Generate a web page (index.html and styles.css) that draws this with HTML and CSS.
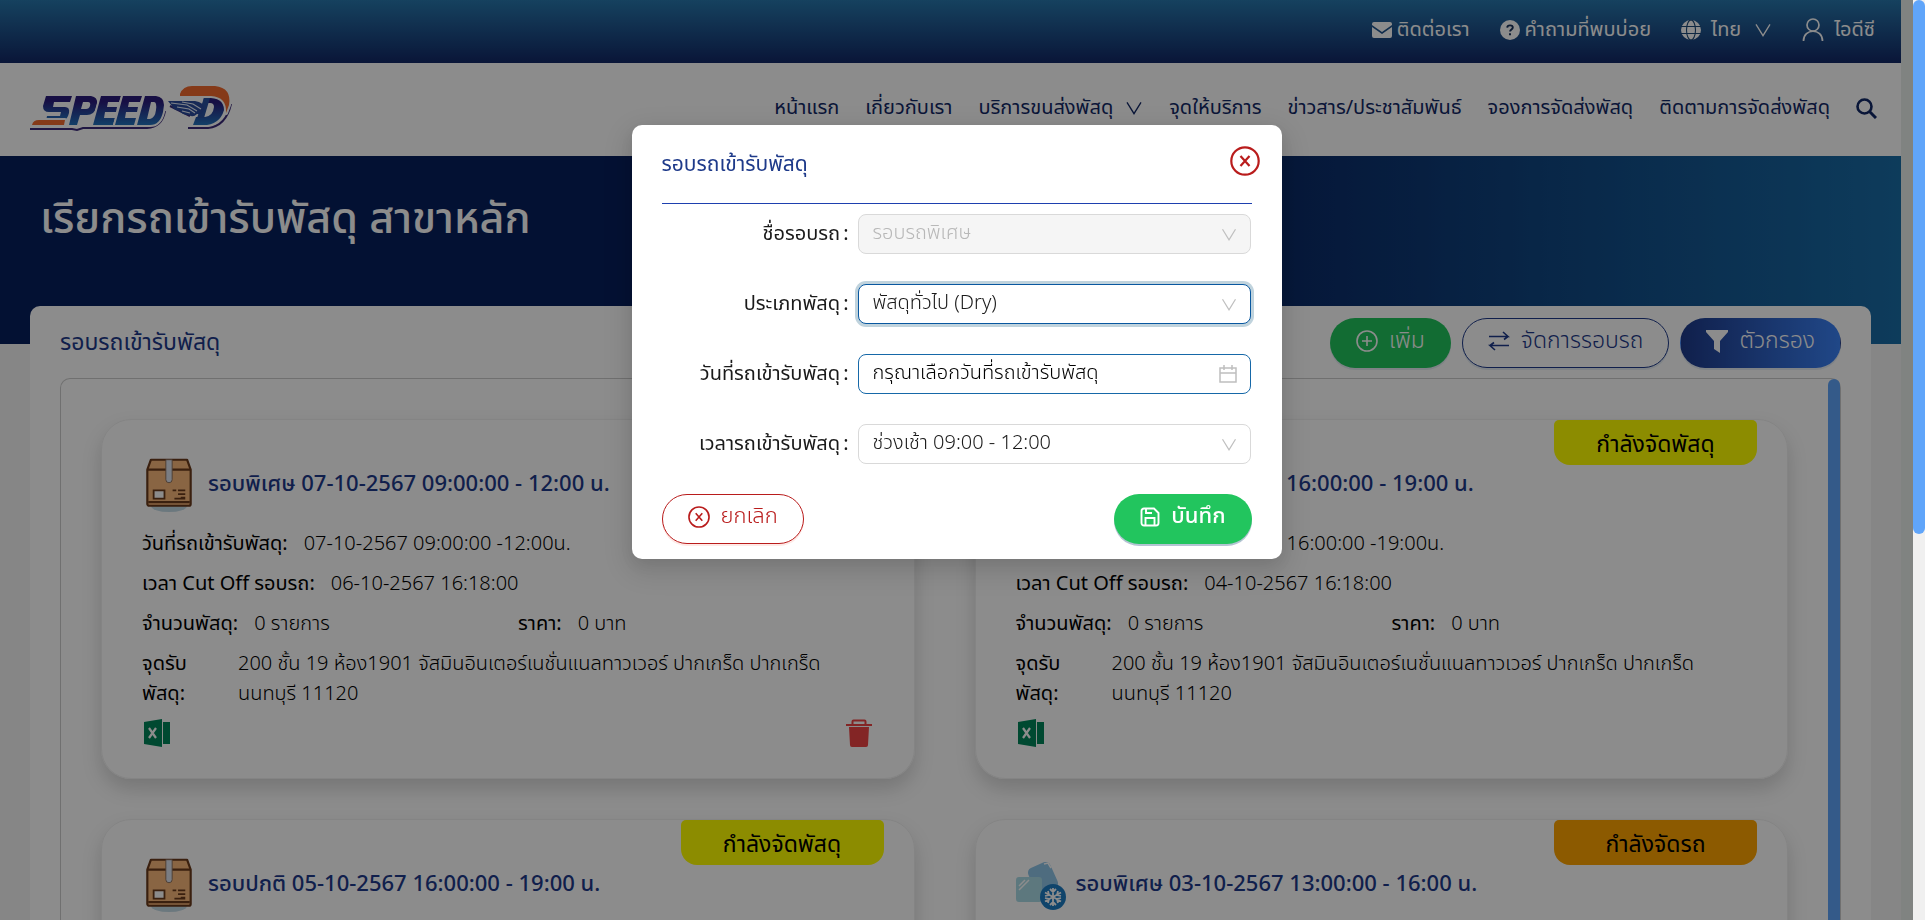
FILE: index.html
```
<!DOCTYPE html>
<html lang="th">
<head>
<meta charset="utf-8">
<title>SPEED-D</title>
<link rel="stylesheet" href="styles.css">
</head>
<body>
<svg class="sprite" aria-hidden="true">
  <symbol id="chevron" viewBox="0 0 18 16"><path d="M1 1.500l8 13 8-13" fill="none" stroke="currentColor" stroke-width="1.500"/></symbol>
  <symbol id="box" viewBox="0 0 50 62">
    <ellipse cx="25" cy="54" rx="20" ry="7" fill="#c3dbe6"/>
    <path d="M5 3h40l4 11v38a2 2 0 0 1-2 2H3a2 2 0 0 1-2-2V14z" fill="#f9b97b" stroke="#6b3b1c" stroke-width="2.400" stroke-linejoin="round"/>
    <path d="M1 14h48M2 50h46" stroke="#6b3b1c" stroke-width="2.400"/>
    <path d="M21.500 3h7v22a3.500 3.500 0 0 1-7 0z" fill="#dfe3ee" stroke="#8a6a55"/>
    <path d="M8 37h12v9H8z" fill="#fff" stroke="#6b3b1c" stroke-width="2"/>
    <path d="M29 37h4M35 37h8M35 41h8M38 45h5M31 46h12" stroke="#6b3b1c" stroke-width="2"/>
  </symbol>
  <symbol id="cold" viewBox="0 0 50 50">
    <rect x="15" y="4" width="24" height="28" rx="5" fill="#8fc5e8" transform="rotate(-24 27 18)"/>
    <path d="M28 4l4-1 3 5" fill="none" stroke="#fff" stroke-width="1.500"/>
    <rect x="0" y="17" width="26" height="25" rx="3" fill="#a9dbe6"/>
    <path d="M3 26l6-6M3 30l10-10" stroke="#fff" stroke-width="1.500"/>
    <circle cx="37" cy="37" r="13" fill="#1d7cc4"/>
    <g fill="none" stroke="#fff" stroke-width="1.800"><path d="M37 28v18M29 32.500l16 9M29 41.500l16-9M34 29l3 3 3-3M34 45l3-3 3 3M29 36l4-1-1-4M45 38l-4 1 1 4M29 38l4 1-1 4M45 36l-4-1 1-4"/></g>
  </symbol>
  <symbol id="excel" viewBox="0 0 26 28"><path d="M0 3L18 0v28L0 25z" fill="#00855a"/><path d="M19 3h7v22h-7z" fill="#00855a"/><path d="M5 9l7 10M12 9L5 19" stroke="#fff" stroke-width="2.200"/></symbol>
  <symbol id="trash" viewBox="0 0 26 28"><path d="M3 8h20l-1 18a2 2 0 0 1-2 2H6a2 2 0 0 1-2-2zM0 5h26v2H0z" fill="#ef4444"/><path d="M6.500 6V2.500a1 1 0 0 1 1-1h11a1 1 0 0 1 1 1V6" fill="none" stroke="#ef4444" stroke-width="2"/></symbol>
  <symbol id="circle-x" viewBox="0 0 30 30"><circle cx="15" cy="15" r="13.700" fill="none" stroke="currentColor" stroke-width="2.200"/><path d="M10.500 10l9 10M19.500 10l-9 10" stroke="currentColor" stroke-width="2.200"/></symbol>
</svg>

<div class="page">
  <div class="topbar">
    <a class="toplink" href="#"><svg width="20" height="16" viewBox="0 0 20 16"><path d="M2 0h16a2 2 0 0 1 2 2v1l-10 7L0 3V2a2 2 0 0 1 2-2zM0 5l10 7 10-7v9a2 2 0 0 1-2 2H2a2 2 0 0 1-2-2z" fill="currentColor"/></svg>ติดต่อเรา</a>
    <a class="toplink" href="#"><svg width="20" height="20" viewBox="0 0 20 20"><circle cx="10" cy="10" r="10" fill="currentColor"/><path d="M7.200 7.600c.2-3 5.600-3 5.600 0 0 2-2.700 2-2.700 4M10 13.200v2" fill="none" stroke="#16305a" stroke-width="1.900"/></svg>คำถามที่พบบ่อย</a>
    <a class="toplink lang" href="#"><svg width="20" height="20" viewBox="0 0 20 20"><circle cx="10" cy="10" r="10" fill="currentColor"/><g fill="none" stroke="#1d4a78" stroke-width="1.100"><ellipse cx="10" cy="10" rx="4.500" ry="10"/><path d="M0 6.500h20M0 13.500h20"/></g></svg>ไทย<svg class="down" width="18" height="14"><use href="#chevron"/></svg></a>
    <a class="toplink user" href="#"><svg width="22" height="23" viewBox="0 0 22 23"><circle cx="11" cy="7" r="6" fill="none" stroke="currentColor" stroke-width="1.700"/><path d="M1.500 23c0-13 19-13 19 0" fill="none" stroke="currentColor" stroke-width="1.700"/></svg>ไอดีซี</a>
  </div>

  <header class="header">
    <svg class="logo" viewBox="0 0 206 48" role="img" aria-label="SPEED-D">
      <defs>
        <linearGradient id="ink" x1="0" y1="0" x2="0" y2="1"><stop offset="0.200" stop-color="#2b1c7c"/><stop offset="1" stop-color="#2273bd"/></linearGradient>
      </defs>
      <path d="M0 44v1h42l5 1 6-2h64q15-1 18-17M140 22l20 10M158 44h20q18-2 23-24" fill="none" stroke="#3b2a7a" stroke-width="2"/>
      <g stroke="#fff" stroke-width="4" stroke-linejoin="round" paint-order="stroke">
        <path d="M16 12h26l-2 6H24l-1 5h12q5 0 4 6l-1 3q-2 5-7 5H16l1-5h13l1-4H19q-6 0-6-6z" fill="url(#ink)"/>
        <path d="M9 36h26l-1 5H2q1-5 7-5z" fill="#f26a2e"/>
        <path d="M46 12h15q7 1 6 8l-1 4q-2 7-9 7h-7l-3 10h-8zm7 6l-2 7h5q3 0 4-3 1-4-2-4z" fill="url(#ink)" fill-rule="evenodd"/>
        <path d="M71 12h20l-2 6H78l-1 5h10l-1 5H75l-1 6h11l-2 7H63z" fill="url(#ink)"/>
        <path d="M93 12h19l-2 6H99l-1 5h10l-1 5H96l-1 6h11l-2 7H85z" fill="url(#ink)"/>
        <path d="M115 12h11q8 1 8 9l-1 7q-3 13-13 13h-13zm6 6l-4 17h3q5-1 6-9 1-8-2-8z" fill="url(#ink)" fill-rule="evenodd"/>
        <path d="M174 13h14q8 1 7 9-3 17-18 19h-14l3-8h9q8-1 9-10 0-4-4-4h-7z" fill="url(#ink)"/>
        <path d="M150 10q3-8 12-8h23q17 2 14 19l-3 8q1-16-15-17h-31z" fill="#f26a2e"/>
      </g>
      <path d="M174 14h6l-6 20h-7z" fill="#28509f"/>
      <path d="M138 17l27 0q9 1 9 8-1 6-7 5-4 4-8 1-7 0-9-4-7-1-8-5z" fill="#2a4c9d"/>
      <path d="M141 19l16 2 10 6M147 23l12 2 6 4M152 27l8 2M152 18l11 2 8 5" fill="none" stroke="#e8eefa" stroke-width="1.100"/>
    </svg>
    <nav class="nav">
      <a href="#">หน้าแรก</a>
      <a href="#">เกี่ยวกับเรา</a>
      <a href="#">บริการขนส่งพัสดุ<svg class="down" width="18" height="14"><use href="#chevron"/></svg></a>
      <a href="#">จุดให้บริการ</a>
      <a href="#">ข่าวสาร/ประชาสัมพันธ์</a>
      <a href="#">จองการจัดส่งพัสดุ</a>
      <a href="#">ติดตามการจัดส่งพัสดุ</a>
      <a href="#" aria-label="ค้นหา"><svg width="21" height="21" viewBox="0 0 21 21"><circle cx="8.500" cy="8.500" r="7" fill="none" stroke="currentColor" stroke-width="2.600"/><path d="M13.500 13.500l6.500 6.500" stroke="currentColor" stroke-width="3"/></svg></a>
    </nav>
  </header>

  <div class="hero"><h1>เรียกรถเข้ารับพัสดุ สาขาหลัก</h1></div>

  <main class="panel">
    <div class="panel-head">
      <h2>รอบรถเข้ารับพัสดุ</h2>
      <div class="actions">
        <button class="btn green"><svg width="22" height="22" viewBox="0 0 22 22"><circle cx="11" cy="11" r="10" fill="none" stroke="currentColor" stroke-width="1.600"/><path d="M11 6v10M6 11h10" stroke="currentColor" stroke-width="1.600"/></svg>เพิ่ม</button>
        <button class="btn outline"><svg width="22" height="20" viewBox="0 0 22 20"><path d="M1 5.500h19l-5-4.500M21 14.500H2l5 4.500M20 5.500l-4 3M2 14.500l4-3" fill="none" stroke="currentColor" stroke-width="1.600"/></svg>จัดการรอบรถ</button>
        <button class="btn blue"><svg width="22" height="23" viewBox="0 0 22 23"><path d="M0 0h22v2l-8 9v12l-6-4v-8L0 2z" fill="currentColor"/></svg>ตัวกรอง</button>
      </div>
    </div>

    <div class="list">
      <div class="cards">
        <article class="card">
          <h3><svg width="50" height="56"><use href="#box"/></svg>รอบพิเศษ 07-10-2567 09:00:00 - 12:00 น.</h3>
          <p class="row"><b>วันที่รถเข้ารับพัสดุ:</b><span>07-10-2567 09:00:00 -12:00น.</span></p>
          <p class="row"><b>เวลา Cut Off รอบรถ:</b><span>06-10-2567 16:18:00</span></p>
          <div class="pair"><p class="row"><b>จำนวนพัสดุ:</b><span>0 รายการ</span></p><p class="row"><b>ราคา:</b><span>0 บาท</span></p></div>
          <p class="address"><b>จุดรับ<br>พัสดุ:</b><span>200 ชั้น 19 ห้อง1901 จัสมินอินเตอร์เนชั่นแนลทาวเวอร์ ปากเกร็ด ปากเกร็ด นนทบุรี 11120</span></p>
          <div class="tools"><button aria-label="Excel"><svg width="26" height="28"><use href="#excel"/></svg></button><button aria-label="ลบ"><svg width="26" height="28"><use href="#trash"/></svg></button></div>
        </article>
        <article class="card">
          <span class="badge yellow">กำลังจัดพัสดุ</span>
          <h3><svg width="50" height="56"><use href="#box"/></svg>รอบปกติ 05-10-2567 16:00:00 - 19:00 น.</h3>
          <p class="row"><b>วันที่รถเข้ารับพัสดุ:</b><span>05-10-2567 16:00:00 -19:00น.</span></p>
          <p class="row"><b>เวลา Cut Off รอบรถ:</b><span>04-10-2567 16:18:00</span></p>
          <div class="pair"><p class="row"><b>จำนวนพัสดุ:</b><span>0 รายการ</span></p><p class="row"><b>ราคา:</b><span>0 บาท</span></p></div>
          <p class="address"><b>จุดรับ<br>พัสดุ:</b><span>200 ชั้น 19 ห้อง1901 จัสมินอินเตอร์เนชั่นแนลทาวเวอร์ ปากเกร็ด ปากเกร็ด นนทบุรี 11120</span></p>
          <div class="tools"><button aria-label="Excel"><svg width="26" height="28"><use href="#excel"/></svg></button></div>
        </article>
        <article class="card">
          <span class="badge yellow">กำลังจัดพัสดุ</span>
          <h3><svg width="50" height="56"><use href="#box"/></svg>รอบปกติ 05-10-2567 16:00:00 - 19:00 น.</h3>
        </article>
        <article class="card">
          <span class="badge orange">กำลังจัดรถ</span>
          <h3 class="chilled"><svg width="50" height="50"><use href="#cold"/></svg>รอบพิเศษ 03-10-2567 13:00:00 - 16:00 น.</h3>
        </article>
      </div>
      <div class="list-bar"></div>
    </div>
  </main>
</div>
<div class="gutter"></div>
<div class="scroll"><div class="thumb"></div></div>

<div class="mask">
  <form class="modal" role="dialog" aria-labelledby="dlg-title">
    <div class="modal-head">
      <h2 id="dlg-title">รอบรถเข้ารับพัสดุ</h2>
      <button class="close" type="button" aria-label="ปิด"><svg width="30" height="30"><use href="#circle-x"/></svg></button>
    </div>
    <div class="field"><label for="round">ชื่อรอบรถ</label><div class="control"><select id="round" disabled><option>รอบรถพิเศษ</option></select><svg width="16" height="13"><use href="#chevron"/></svg></div></div>
    <div class="field"><label for="kind">ประเภทพัสดุ</label><div class="control"><select id="kind" class="focused"><option>พัสดุทั่วไป (Dry)</option></select><svg width="16" height="13"><use href="#chevron"/></svg></div></div>
    <div class="field"><label for="date">วันที่รถเข้ารับพัสดุ</label><div class="control"><input id="date" type="text" placeholder="กรุณาเลือกวันที่รถเข้ารับพัสดุ"><svg width="18" height="18" viewBox="0 0 18 18"><path d="M1 3h16v14H1zM1 8h16M5 0v5M13 0v5" fill="none" stroke="currentColor" stroke-width="1.500"/></svg></div></div>
    <div class="field"><label for="time">เวลารถเข้ารับพัสดุ</label><div class="control"><select id="time"><option>ช่วงเช้า 09:00 - 12:00</option></select><svg width="16" height="13"><use href="#chevron"/></svg></div></div>
    <div class="modal-foot">
      <button class="btn cancel" type="button"><svg width="22" height="22"><use href="#circle-x"/></svg>ยกเลิก</button>
      <button class="btn green save" type="button"><svg width="20" height="20" viewBox="0 0 20 20"><path d="M1.500 4a2.500 2.500 0 0 1 2.500-2.500h10L18.500 6v10a2.500 2.500 0 0 1-2.500 2.500H4A2.500 2.500 0 0 1 1.500 16zM5.500 18v-7h9v7M6 2v4h6" fill="none" stroke="currentColor" stroke-width="1.900"/></svg>บันทึก</button>
    </div>
  </form>
</div>
</body>
</html>
```
FILE: styles.css
```
* { box-sizing: border-box; }
body {
  margin: 0;
  height: 100vh;
  display: flex;
  overflow: hidden;
  font-family: "Noto Sans Thai", "Noto Sans", sans-serif;
  font-size: 20px;
  font-weight: 300;
  line-height: 30px;
  color: #000;
  background: #f5f5f5;
}
h1, h2, h3, p { margin: 0; font-weight: 400; }
a { color: inherit; text-decoration: none; }
button, input, select { font: inherit; }
.sprite { position: absolute; width: 0; height: 0; }
svg { flex: none; }

.page { flex: 1; min-width: 0; overflow: hidden; }
.gutter { width: 12px; background: #e9eeec; }
.scroll { width: 12px; background: #f0f0f0; }
.thumb { height: 58vh; border-radius: 6px; background: #60a5fa; }

.topbar {
  height: 63px;
  padding: 0 26px 4px;
  display: flex;
  justify-content: flex-end;
  align-items: center;
  gap: 30px;
  font-weight: 400;
  color: #fff;
  background: linear-gradient(#2878ad, #122866);
}
.toplink { display: flex; align-items: center; gap: 5px; }
.toplink.lang, .toplink.user { gap: 10px; }
.down { margin-left: 12px; }
.lang .down { margin-left: 3px; }

.header {
  height: 93px;
  padding: 0 24px 3px 30px;
  display: flex;
  justify-content: space-between;
  align-items: center;
  background: #fff;
}
.logo { width: 206px; height: 48px; }
.nav { display: flex; align-items: center; gap: 26px; font-weight: 400; color: #122866; }
.nav a { display: flex; align-items: center; }

.hero {
  height: 188px;
  padding: 29px 40px;
  color: #fff;
  background: linear-gradient(90deg, #071f5d 62%, #196da7);
}
.hero h1 { font-size: 43px; font-weight: 500; line-height: 70px; }

.panel {
  margin: -38px 30px 0;
  padding: 12px 30px 0;
  border-radius: 10px 10px 0 0;
  background: #fff;
}
.panel-head { display: flex; justify-content: space-between; align-items: center; color: #1e3a8a; }
.panel-head h2 { font-size: 23px; }
.actions { display: flex; gap: 11px; }
.btn {
  height: 50px;
  padding: 0 25px 4px;
  display: flex;
  align-items: center;
  gap: 11px;
  border: 1px solid transparent;
  border-radius: 25px;
  font-size: 22px;
  box-shadow: 0 2px 0 rgba(5, 80, 145, .1);
}
.actions .btn { font-size: 23px; }
.green { color: #fff; background: #22c55e; }
.outline { color: #1e3a8a; background: #fff; border-color: #1e3a8a; }
.blue { color: #fff; background: linear-gradient(90deg, #1e3a8a, #3b82f6); }

.list {
  margin-top: 10px;
  display: flex;
  border: 1px solid #ccc;
  border-bottom: 0;
  border-radius: 10px 10px 0 0;
}
.list-bar { width: 12px; border-radius: 6px 6px 0 0; background: #60a5fa; }
.cards {
  flex: 1;
  padding: 40px;
  display: grid;
  grid-template-columns: 1fr 1fr;
  gap: 40px 60px;
}
.card {
  position: relative;
  min-height: 360px;
  padding: 37px 40px 24px;
  border: 1px solid #f0f0f0;
  border-radius: 30px;
  box-shadow: 0 10px 20px rgba(0, 0, 0, .16);
}
.card h3 { display: flex; align-items: center; gap: 14px; height: 55px; padding-left: 2px; font-size: 22px; font-weight: 500; color: #1e3a8a; }
.card h3.chilled { gap: 10px; padding-left: 0; }
.badge {
  position: absolute;
  top: 0;
  right: 30px;
  width: 203px;
  height: 45px;
  padding-top: 10px;
  border-radius: 5px 5px 16px 16px;
  text-align: center;
  font-size: 23px;
  font-weight: 400;
}
.yellow { background: #ff0; }
.orange { background: orange; }
.card b { font-weight: 400; }
.row { display: flex; gap: 16px; margin-top: 10px; font-weight: 300; }
h3 + .row { margin-top: 17px; }
.pair { display: grid; grid-template-columns: 376px 1fr; }
.address { display: grid; grid-template-columns: 96px 1fr; margin-top: 10px; font-weight: 300; }
.tools { display: flex; justify-content: space-between; margin-top: 10px; }
.tools button { display: flex; padding: 0 2px; border: 0; background: none; }

.mask {
  position: fixed;
  inset: 0 12px 0 0;
  display: flex;
  justify-content: center;
  align-items: flex-start;
  padding-top: 125px;
  background: rgba(0, 0, 0, .45);
}
.modal {
  width: 650px;
  padding: 0 30px 15px;
  border-radius: 10px;
  background: #fff;
  box-shadow: 0 6px 16px rgba(0, 0, 0, .08), 0 9px 28px 8px rgba(0, 0, 0, .1);
}
.modal-head {
  position: relative;
  height: 79px;
  padding-top: 25px;
  margin-bottom: 10px;
  border-bottom: 1px solid #1e40af;
}
.modal-head h2 { font-size: 21px; color: #1e3a8a; }
.close { position: absolute; top: 21px; right: -8px; display: flex; padding: 0; border: 0; background: none; color: #b91c1c; }
.field { display: grid; grid-template-columns: 196px 1fr; margin-bottom: 30px; }
.field label { padding: 5px 9px 0 0; text-align: right; font-weight: 400; color: #1a1a1a; }
.field label::after { content: ":"; margin-left: 3px; }
.control { position: relative; margin-right: 1px; }
.control select, .control input {
  width: 100%;
  height: 40px;
  padding: 0 44px 2px 14px;
  border: 1px solid #d9d9d9;
  border-radius: 8px;
  appearance: none;
  background: #fff;
  color: #1a1a1a;
  outline: none;
}
.control select:disabled { background: #f5f5f5; color: #b8b8b8; opacity: 1; }
.control .focused { border-color: #0958a0; box-shadow: 0 0 0 3px rgba(5, 80, 120, .25); }
.control input { border-color: #1668a8; }
.control input::placeholder { color: #000; opacity: 1; }
.control svg { position: absolute; right: 14px; top: 0; bottom: 0; margin: auto 0; color: #bfbfbf; pointer-events: none; }
.modal-foot { display: flex; justify-content: space-between; }
.cancel { color: #b91c1c; background: #fff; border-color: #b91c1c; box-shadow: 0 2px 0 rgba(255, 38, 5, .1); }
.save { font-weight: 500; box-shadow: 0 2px 0 rgba(5, 60, 110, .3); }
```
